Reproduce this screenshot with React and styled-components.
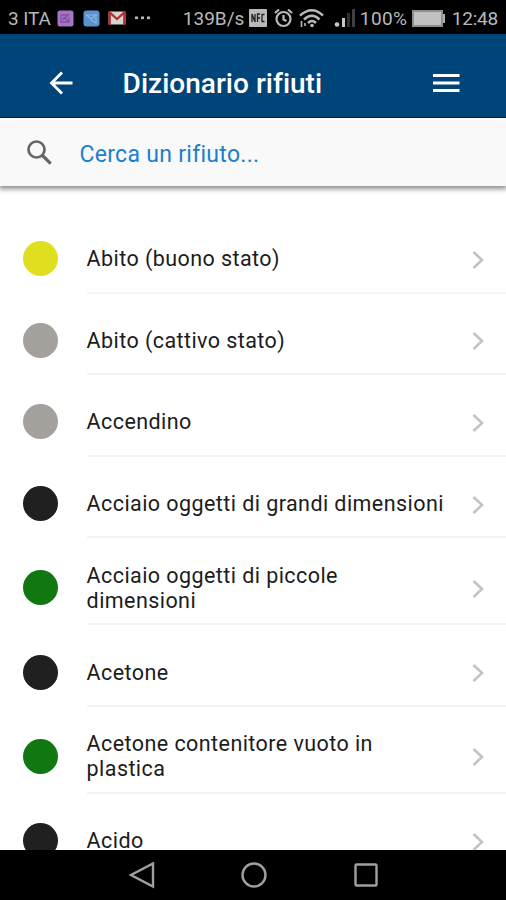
import React from "react";
import styled, { createGlobalStyle } from "styled-components";

const GlobalStyle = createGlobalStyle`
  * { box-sizing: border-box; }
  body { margin: 0; background: #000; font-family: Roboto, "Liberation Sans", sans-serif; }
`;

const Screen = styled.div`
  width: 506px;
  height: 900px;
  display: flex;
  flex-direction: column;
  overflow: hidden;
  background: #fff;
`;

const StatusBar = styled.div`
  height: 34px;
  flex: none;
  display: flex;
  align-items: center;
  padding: 2px 8px 0 8px;
  background: #000;
  color: #b9b9b9;
  font-size: 19px;
  line-height: 22px;
  white-space: nowrap;
`;

const StatusText = styled.span`
  width: ${(p) => p.$w}px;
  padding-top: 1px;
  margin-left: ${(p) => p.$gap || 0}px;
  letter-spacing: ${(p) => p.$spacing || 0}px;
`;

const StatusIcon = styled.svg`
  flex: none;
  display: block;
  margin-left: ${(p) => p.$gap || 0}px;
`;

const Header = styled.header`
  height: 84px;
  flex: none;
  display: flex;
  align-items: center;
  padding: 15px 44px 0 46px;
  background: #00457a;
  border-bottom: 1px solid #002068;
  color: #fff;
`;

const Title = styled.h1`
  flex: 1;
  margin: 1px 0 0 46.6px;
  font-size: 28px;
  line-height: 34px;
  font-weight: 500;
  letter-spacing: 0.02px;
  white-space: nowrap;
`;

const SearchBar = styled.div`
  height: 68px;
  flex: none;
  z-index: 1;
  display: flex;
  align-items: center;
  padding: 4px 24px 0 23px;
  background: #f9f9f9;
  box-shadow: 0 2px 5px 1px rgba(0, 0, 0, 0.45);
`;

const SearchLabel = styled.span`
  margin: 2px 0 0 22.4px;
  color: #1b80cc;
  font-size: 23px;
  line-height: 28px;
  letter-spacing: 0.3px;
`;

const List = styled.ul`
  flex: 1;
  min-height: 0;
  margin: 0;
  padding: 26px 0 0;
  list-style: none;
  overflow: hidden;
`;

const Row = styled.li`
  height: ${(p) => (p.$tall ? 87 : 81.6)}px;
  display: flex;
  align-items: stretch;
  padding-left: 23px;
`;

const Dot = styled.span`
  width: 35px;
  height: 35px;
  flex: none;
  align-self: center;
  margin: 12px 28.6px 0 0;
  border-radius: 50%;
  background: ${(p) => p.$color};
`;

const RowBody = styled.div`
  flex: 1;
  display: flex;
  align-items: center;
  padding: 14px 20px 0 0;
  border-bottom: 2px solid #f4f4f4;
`;

const Label = styled.span`
  flex: 1;
  color: #1c1c1c;
  font-size: 21.5px;
  line-height: 25.3px;
  letter-spacing: 0.43px;
  white-space: pre-line;
`;

const Chevron = styled.svg`
  flex: none;
  display: block;
  margin-top: 2px;
`;

const NavBar = styled.nav`
  height: 50px;
  flex: none;
  display: flex;
  justify-content: center;
  align-items: center;
  gap: 84px;
  background: #000;
`;

const NavIcon = styled.svg`
  display: block;
  fill: none;
  stroke: #a0a0a0;
  stroke-width: 2.4;
`;

const items = [
  { label: "Abito (buono stato)", color: "#dfdf20" },
  { label: "Abito (cattivo stato)", color: "#a4a09c" },
  { label: "Accendino", color: "#a4a09c" },
  { label: "Acciaio oggetti di grandi dimensioni", color: "#202020" },
  { label: "Acciaio oggetti di piccole\ndimensioni", color: "#117711", tall: true },
  { label: "Acetone", color: "#202020" },
  { label: "Acetone contenitore vuoto in\nplastica", color: "#117711", tall: true },
  { label: "Acido", color: "#202020" },
];

function Status() {
  return (
    <StatusBar>
      <StatusText $w={50} $spacing={-0.1}>3 ITA</StatusText>
      <StatusIcon width="17" height="17" viewBox="0 0 17 17">
        <rect x="0.5" y="0.5" width="16" height="16" rx="2.5" fill="#a574c4" />
        <path d="M4 5h7M4 5v7h8V7M6 10l6-6M7 7l4 4M6 8h3" stroke="#7d52a3" strokeWidth="1.3" fill="none" />
      </StatusIcon>
      <StatusIcon $gap={9} width="17" height="17" viewBox="0 0 17 17">
        <rect x="0.5" y="0.5" width="16" height="16" rx="3" fill="#5b93cf" />
        <path d="M3.500 5h10L8 9zM8 10l5 3V7" stroke="#8fb6df" strokeWidth="1.2" fill="none" />
      </StatusIcon>
      <StatusIcon $gap={8} width="18" height="14" viewBox="0 0 18 14">
        <rect x="0.5" y="0.5" width="17" height="13" rx="1.5" fill="#d8d4d0" />
        <path d="M1.700 14V1.500L9 8l7.300-6.500V14" stroke="#b3302c" strokeWidth="2.300" fill="none" />
      </StatusIcon>
      <StatusIcon $gap={9} width="15" height="4" viewBox="0 0 15 4" fill="#b9b9b9">
        <rect x="0" y="0.5" width="3" height="2.6" />
        <rect x="6" y="0.5" width="3" height="2.6" />
        <rect x="12" y="0.5" width="3" height="2.6" />
      </StatusIcon>
      <StatusText $gap={33} $w={60}>139B/s</StatusText>
      <StatusIcon $gap={6} width="18" height="18" viewBox="0 0 18 18">
        <rect width="18" height="18" rx="1" fill="#b9b9b9" />
        <path d="M3 13V5l3 8V5M8.5 13V5h2.5M8.5 9H11M15.5 5.5h-2.5v7h2.5" stroke="#222" strokeWidth="1.3" fill="none" />
      </StatusIcon>
      <StatusIcon $gap={7} width="19" height="20" viewBox="0 0 19 20" fill="none" stroke="#b9b9b9" strokeWidth="2.2">
        <circle cx="9.5" cy="11" r="7" />
        <path d="M1 5l4-3.5M18 5l-4-3.5M9.5 7v4.5l3 1.5" />
      </StatusIcon>
      <StatusIcon $gap={6} width="25" height="20" viewBox="0 0 25 20" fill="none" stroke="#b9b9b9" strokeWidth="2.5">
        <path d="M1 7.500Q13 -3 24 7.500M5 11.500Q13 4 20.500 11.500M9 15Q13 11 17 15" />
        <circle cx="13" cy="17.500" r="1.800" fill="#b9b9b9" stroke="none" />
        <path d="M2.500 13v6M6 15v3" strokeWidth="1.600" />
      </StatusIcon>
      <StatusIcon $gap={10} width="23" height="18" viewBox="0 0 23 18">
        <circle cx="3" cy="15.500" r="2.300" fill="#c8c8c8" />
        <rect x="8" y="9" width="3" height="9" fill="#c8c8c8" />
        <rect x="13" y="4" width="3" height="14" fill="#303030" />
        <rect x="18" y="0" width="3" height="18" fill="#404040" />
      </StatusIcon>
      <StatusText $gap={3} $w={49} $spacing={0.4}>100%</StatusText>
      <StatusIcon $gap={4} width="34" height="17" viewBox="0 0 34 17">
        <rect x="1" y="1" width="29" height="15" fill="#c1c1c1" stroke="#8e8e8e" strokeWidth="2" />
        <path d="M31 4h2v9h-2z" fill="#b0b0b0" />
      </StatusIcon>
      <StatusText $gap={6} $w={47} $spacing={-0.2}>12:48</StatusText>
    </StatusBar>
  );
}

export default function App() {
  return (
    <>
      <GlobalStyle />
      <Screen>
        <Status />
        <Header>
          <svg width="30" height="30" viewBox="0 0 30 30" fill="none" stroke="#fff" strokeWidth="2.8">
            <path d="M26.500 15H5M16 4.500L5.500 15L16 25.500" />
          </svg>
          <Title>Dizionario rifiuti</Title>
          <svg width="30" height="30" viewBox="0 0 30 30" fill="#fff">
            <path d="M1 6h26.500v3H1zM1 13.500h26.500v3H1zM1 21h26.500v3H1z" />
          </svg>
        </Header>
        <SearchBar>
          <svg width="34" height="34" viewBox="0 0 34 34" fill="none" stroke="#666" strokeWidth="2.7">
            <circle cx="13.500" cy="12.500" r="8" />
            <path d="M19 18l8.700 8.700" strokeWidth="3.200" />
          </svg>
          <SearchLabel>Cerca un rifiuto...</SearchLabel>
        </SearchBar>
        <List>
          {items.map((item) => (
            <Row key={item.label} $tall={item.tall}>
              <Dot $color={item.color} />
              <RowBody>
                <Label>{item.label}</Label>
                <Chevron width="14" height="20" viewBox="0 0 14 20" fill="none" stroke="#c3c3c3" strokeWidth="2.6">
                  <path d="M1.500 2l8.500 8L1.500 18" />
                </Chevron>
              </RowBody>
            </Row>
          ))}
        </List>
        <NavBar>
          <NavIcon width="29" height="28" viewBox="0 0 29 28">
            <path d="M26 2.500v23L4 14z" />
          </NavIcon>
          <NavIcon width="28" height="28" viewBox="0 0 28 28">
            <circle cx="14" cy="14" r="11.500" />
          </NavIcon>
          <NavIcon width="28" height="28" viewBox="0 0 28 28">
            <rect x="3.500" y="3.500" width="21" height="21" rx="1" />
          </NavIcon>
        </NavBar>
      </Screen>
    </>
  );
}
